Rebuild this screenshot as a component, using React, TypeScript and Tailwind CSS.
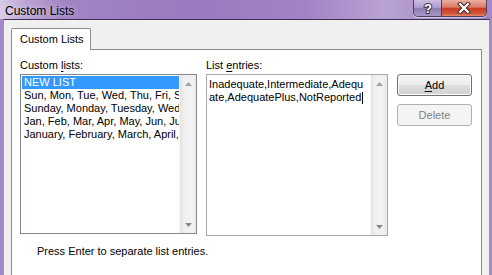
import React from "react";

const font = { fontFamily: "'Liberation Sans', Arial, sans-serif" };

function ScrollArrow({ up }: { up: boolean }) {
  return (
    <div className="h-[17px] flex items-center justify-center">
      <svg width="7" height="4" viewBox="0 0 7 4">
        {up ? (
          <path d="M0 4 L3.5 0 L7 4 Z" fill="#a0a0a0" />
        ) : (
          <path d="M0 0 L7 0 L3.5 4 Z" fill="#8a8a8a" />
        )}
      </svg>
    </div>
  );
}

function ScrollBar() {
  return (
    <div className="w-[17px] flex flex-col justify-between bg-[linear-gradient(90deg,#e3e3e3_0%,#f0f0f0_25%,#f2f2f2_75%,#e8e8e8_100%)] border-l border-[#f7f7f7]">
      <ScrollArrow up />
      <ScrollArrow up={false} />
    </div>
  );
}

export default function App() {
  const items = [
    "Sun, Mon, Tue, Wed, Thu, Fri, Sat",
    "Sunday, Monday, Tuesday, Wednesday, Thursday, Friday, Saturday",
    "Jan, Feb, Mar, Apr, May, Jun, Jul, Aug, Sep, Oct, Nov, Dec",
    "January, February, March, April, May, June, July",
  ];
  return (
    <div
      className="w-[492px] h-[275px] overflow-hidden flex flex-col bg-[#a286c6] text-[11px] text-black"
      style={font}
    >
      {/* Title bar */}
      <div className="h-[24px] flex justify-between items-start bg-[linear-gradient(90deg,#d8cce6_0%,#bba5d5_5%,#a084c4_13%,#9a7abe_40%,#a283c5_62%,#b8a2d3_78%,#ac92cb_88%,#a286c6_100%)]">
        <div className="pl-[5px] pt-[4px] text-[12px] leading-[15px] [text-shadow:0_0_6px_rgba(255,255,255,0.7)]">
          Custom Lists
        </div>
        <div className="mr-[5px] flex h-[17px] rounded-b-[5px] border border-t-0 border-[#4d3f60] overflow-hidden shadow-[0_1px_0_rgba(255,255,255,0.5)]">
          <div className="w-[28px] flex items-center justify-center border-r border-[#4d3f60] bg-[linear-gradient(180deg,#cbbde0_0%,#ac98cc_50%,#8f7cb1_52%,#a596c4_100%)]">
            <svg width="12" height="14" viewBox="0 0 12 14">
              <text
                x="6"
                y="12"
                textAnchor="middle"
                fontSize="13"
                fontWeight="bold"
                fontFamily="'Liberation Sans', sans-serif"
                fill="#ffffff"
                stroke="#3b3050"
                strokeWidth="2"
                paintOrder="stroke"
              >
                ?
              </text>
            </svg>
          </div>
          <div className="w-[44px] flex items-center justify-center bg-[linear-gradient(180deg,#eab0a2_0%,#dc7a64_45%,#c83a24_52%,#d4583e_85%,#e88a66_100%)]">
            <svg width="14" height="12" viewBox="0 0 14 12">
              <path d="M3 2 L11 10 M11 2 L3 10" stroke="#3a2a2a" strokeWidth="4.2" strokeLinecap="square" />
              <path d="M3 2 L11 10 M11 2 L3 10" stroke="#ffffff" strokeWidth="2.2" strokeLinecap="square" />
            </svg>
          </div>
        </div>
      </div>
      <div className="h-px bg-[#dccfea]" />
      {/* Client */}
      <div className="flex-1 ml-[3px] mr-[2px] bg-[#f0f0f0] border-t border-l border-r border-t-[#3e3050] border-l-[#9c98a3] border-r-[#9c98a3] pl-[7px] pt-[8px]">
        {/* Tab header */}
        <div className="relative z-10 w-[80px] h-[22px] -mb-px bg-white border border-b-0 border-[#898c95] rounded-t-[2px] pl-[8px] pt-[3px] leading-[15px]">
          Custom Lists
        </div>
        {/* Tab panel */}
        <div className="w-[471px] h-[300px] bg-white border border-[#898c95] pl-[8px] pt-[8px]">
          <div className="flex items-start">
            {/* Left column */}
            <div className="w-[177px] flex flex-col">
              <div className="leading-[15px] h-[15px] mb-[1px]">
                Custom <span className="underline underline-offset-2">l</span>ists:
              </div>
              <div className="h-[160px] border border-[#828790] flex bg-white">
                <div className="flex-1 overflow-hidden pt-px pl-px">
                  <div className="h-[13px] leading-[13px] bg-[#3399ff] text-white pl-[2px] whitespace-nowrap">
                    NEW LIST
                  </div>
                  {items.map((t) => (
                    <div key={t} className="h-[13px] leading-[13px] pl-[2px] whitespace-nowrap overflow-hidden">
                      {t}
                    </div>
                  ))}
                </div>
                <ScrollBar />
              </div>
            </div>
            {/* Middle column */}
            <div className="w-[182px] ml-[9px] flex flex-col">
              <div className="leading-[15px] h-[15px] mb-[1px]">
                List <span className="underline underline-offset-2">e</span>ntries:
              </div>
              <div className="h-[162px] border border-[#a9a9ad] flex bg-white">
                <div className="flex-1 overflow-hidden pt-[3px] pl-[2px] leading-[13px] whitespace-nowrap">
                  <div className="h-[13px]">Inadequate,Intermediate,Adequ</div>
                  <div className="h-[13px] flex items-center">
                    <span>ate,AdequatePlus,NotReported</span>
                    <span className="inline-block w-px h-[12px] bg-black ml-px" />
                  </div>
                </div>
                <ScrollBar />
              </div>
            </div>
            {/* Buttons */}
            <div className="w-[75px] ml-[9px] mt-[16px] flex flex-col">
              <button className="h-[22px] rounded-[3px] border border-[#707070] bg-[linear-gradient(180deg,#f4f4f4_0%,#ececec_50%,#dedede_52%,#d2d2d2_100%)] shadow-[inset_0_0_0_1px_#fbfbfb] leading-[18px] text-black">
                <span className="underline underline-offset-2">A</span>dd
              </button>
              <button className="mt-[8px] h-[22px] rounded-[3px] border border-[#adb2b5] bg-[#f4f4f4] leading-[18px] text-[#838383]">
                Delete
              </button>
            </div>
          </div>
          <div className="mt-[8px] ml-[17px] leading-[15px]">
            Press Enter to separate list entries.
          </div>
        </div>
      </div>
    </div>
  );
}
